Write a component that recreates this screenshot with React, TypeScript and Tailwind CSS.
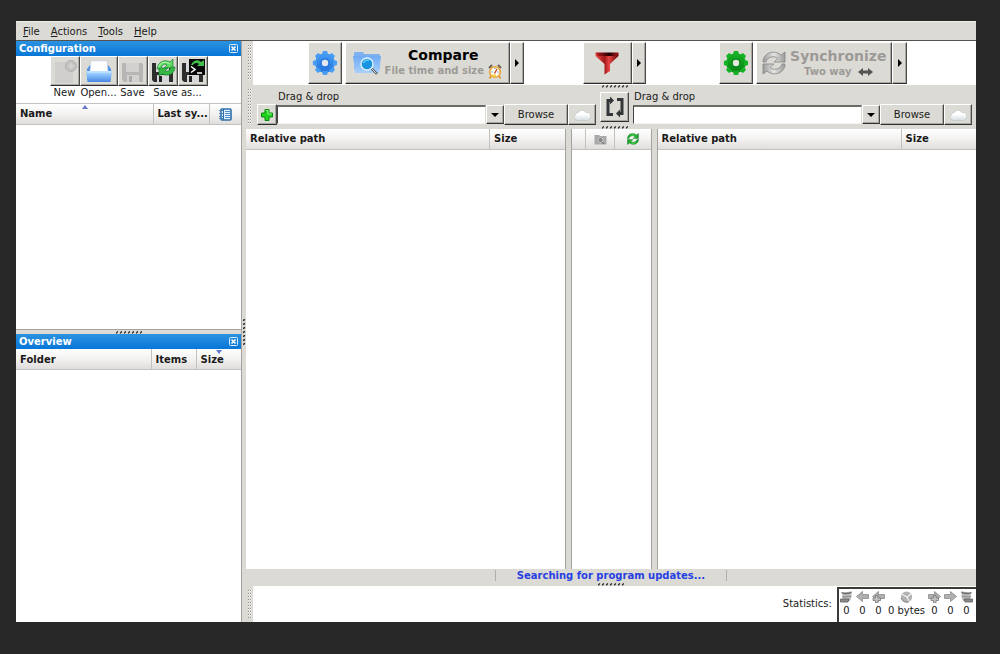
import { useState, type ReactNode } from 'react'
import clsx from 'clsx'

const raised =
  'border border-t-white border-l-white border-r-[#4a4a4a] border-b-[#2e2e2e] bg-[#dcdad5] shadow-[inset_-1px_-1px_0_#aaa8a3]'

interface ToolButtonProps {
  label: string
  className?: string
  disabled?: boolean
  children: ReactNode
}

function ToolButton({ label, className, disabled, children }: ToolButtonProps) {
  return (
    <button
      type="button"
      aria-label={label}
      disabled={disabled}
      className={clsx('flex shrink-0 items-center justify-center', raised, className)}
    >
      {children}
    </button>
  )
}

function ArrowRight() {
  return (
    <svg width="4" height="8" viewBox="0 0 4 8">
      <path d="M0 0L4 4L0 8Z" fill="#000" />
    </svg>
  )
}

// Dotted handle used on every splitter
function SashDots({ vertical }: { vertical?: boolean }) {
  const dots = [0, 1, 2, 3, 4, 5, 6]
  if (vertical) {
    return (
      <svg width="3" height="26" viewBox="0 0 3 26">
        {dots.map((i) => (
          <path key={i} d={`M0 ${i * 4 + 1.6}L2 ${i * 4 + 0.4}`} stroke="#222" strokeWidth="1.3" />
        ))}
      </svg>
    )
  }
  return (
    <svg width="26" height="3" viewBox="0 0 26 3">
      {dots.map((i) => (
        <path key={i} d={`M${i * 4 + 0.3} 2.4L${i * 4 + 1.7} 0.4`} stroke="#222" strokeWidth="1.3" />
      ))}
    </svg>
  )
}

function Gripper() {
  return (
    <div className="flex w-[7px] shrink-0 justify-center py-1">
      <div className="w-[4px] bg-[linear-gradient(135deg,#8d8b87_0_30%,#f4f3f1_30%_50%,transparent_50%)] bg-[size:2px_3px]" />
    </div>
  )
}

function GearIcon({ id, light, dark, hole }: { id: string; light: string; dark: string; hole: string }) {
  const teeth = [0, 45, 90, 135, 180, 225, 270, 315]
  return (
    <svg width="26" height="26" viewBox="0 0 26 26">
      <defs>
        <linearGradient id={id} x1="0" y1="0" x2="0" y2="26" gradientUnits="userSpaceOnUse">
          <stop offset="0" stopColor={light} />
          <stop offset="1" stopColor={dark} />
        </linearGradient>
      </defs>
      <g fill={`url(#${id})`}>
        <circle cx="13" cy="13" r="9.8" />
        {teeth.map((a) => (
          <path key={a} d="M9.8 5L10.9 0.9H15.1L16.2 5Z" transform={`rotate(${a} 13 13)`} />
        ))}
      </g>
      <circle cx="13" cy="13" r="5" fill={dark} opacity="0.5" />
      <circle cx="13" cy="13" r="3.2" fill={hole} />
    </svg>
  )
}

function NewIcon() {
  return (
    <svg width="26" height="26" viewBox="0 0 26 26">
      <path d="M3 4H17L21 10V25H3Z" fill="#d0cfce" />
      <path d="M3 8L20 25M3 14L14 25M5 4L21 20M11 4L21 14M3 20L19 4M8 25L21 12" stroke="#cacac9" strokeWidth="0.6" />
      <circle cx="19" cy="8" r="5.5" fill="#c3c2c1" stroke="#b2b1b0" />
      <path d="M19 5V11M16 8H22" stroke="#d3d2d1" strokeWidth="2" />
    </svg>
  )
}

function OpenIcon() {
  return (
    <svg width="28" height="26" viewBox="0 0 28 26">
      <defs>
        <linearGradient id="open" x1="0" y1="0" x2="0" y2="1">
          <stop offset="0" stopColor="#b5dcff" />
          <stop offset="0.35" stopColor="#8cc3fd" />
          <stop offset="1" stopColor="#4686df" />
        </linearGradient>
      </defs>
      <path d="M2 11L5 7H23L26 11V22H2Z" fill="#4e91e4" />
      <path d="M6 3H22L23 14H5Z" fill="#fff" stroke="#c9d8ea" strokeWidth="0.7" />
      <path d="M1 13H27L25.5 24H2.5Z" fill="url(#open)" />
      <path d="M2 14H26" stroke="#d5ebff" />
    </svg>
  )
}

function FloppyShape({ body, label, slot }: { body: string; label: string; slot: string }) {
  return (
    <>
      <path d="M2 5H22L23 6V24H4L2 22Z" fill={body} />
      <path d="M6 5H19V14H6Z" fill={label} />
      <path d="M7 17H19V24H7Z" fill={label} />
      <path d="M9 18H12V24H9Z" fill={slot} />
    </>
  )
}

function SaveIcon() {
  return (
    <svg width="26" height="26" viewBox="0 0 26 26">
      <FloppyShape body="#b7b6b5" label="#d2d1d0" slot="#acabaa" />
    </svg>
  )
}

function SaveSyncIcon() {
  return (
    <svg width="26" height="26" viewBox="0 0 26 26">
      <FloppyShape body="#2d2d2d" label="#d7d8da" slot="#222" />
      <g stroke="#15702a" strokeWidth="0.6">
        <path d="M7 11C8 3 15 1 20 4L23 1V10H14L17 7C14 5 12 7 11 11Z" fill="#5bdc60" />
        <path d="M25 9C25 16 18 19 12 16L9 18V10H18L15 13C18 14 20 12 21 9Z" fill="#35b944" />
      </g>
      <path d="M9 9C10 4 15 3 20 6" stroke="#c0f5bb" fill="none" />
    </svg>
  )
}

function SaveBatchIcon() {
  return (
    <svg width="26" height="26" viewBox="0 0 26 26">
      <FloppyShape body="#2d2d2d" label="#d7d8da" slot="#222" />
      <rect x="9" y="1" width="16" height="16" fill="#080808" />
      <path d="M11 7C13 2 18 1 21 4L24 2V8H17L19 6C17 4 14 5 13 7Z" fill="#41bd4c" />
      <path d="M11 8.5L15 11.5L11 14.5M17 15H22" stroke="#fff" strokeWidth="1.5" fill="none" />
    </svg>
  )
}

function LogIcon() {
  return (
    <svg width="13" height="13" viewBox="0 0 13 13">
      <rect x="2" y="1" width="10" height="11" rx="1" fill="#e4f1fc" stroke="#2f6da8" strokeWidth="1.6" />
      <path d="M4.5 1V12" stroke="#2f6da8" />
      <path d="M0 2.5H4M0 5.5H4M0 8.5H4M0 10.5H4" stroke="#4d86ba" />
      <path d="M6 3.5H11M6 5.5H11M6 7.5H11M6 9.5H11" stroke="#4c94d6" />
    </svg>
  )
}

function FolderSearchIcon() {
  return (
    <svg width="28" height="24" viewBox="0 0 28 24">
      <defs>
        <linearGradient id="folder" x1="0" y1="0" x2="0" y2="1">
          <stop offset="0" stopColor="#6faaf4" />
          <stop offset="1" stopColor="#a9d0fc" />
        </linearGradient>
      </defs>
      <path d="M1 2L2 1H10L11 3H26L27 4V18H1Z" fill="#7db0f0" />
      <path d="M0 5H28L26 22H2Z" fill="url(#folder)" />
      <path d="M18 17L24 23" stroke="#555" strokeWidth="2.4" />
      <path d="M18 17L23.5 22.5" stroke="#ddd" />
      <circle cx="14" cy="13" r="6" fill="#1793df" stroke="#dff0fb" strokeWidth="1.4" />
      <path d="M10.5 12A4 4 0 0 1 16 9.5" stroke="#5fcafa" strokeWidth="1.6" fill="none" />
    </svg>
  )
}

function ClockIcon() {
  return (
    <svg width="14" height="15" viewBox="0 0 14 15">
      <path d="M1 4L4 1M10 1L13 4" stroke="#6a6152" strokeWidth="1.8" />
      <path d="M3 12L1.5 14.5M11 12L12.5 14.5" stroke="#e09223" strokeWidth="1.5" />
      <circle cx="7" cy="8" r="5.3" fill="#fdfbf0" stroke="#eba234" strokeWidth="1.6" />
      <path d="M6.5 9.5L9 5" stroke="#c53122" strokeWidth="1.2" fill="none" />
      <path d="M4 11.5H8" stroke="#f5d330" strokeWidth="1.8" />
      <path d="M7 4V5M10.5 8H9.5M4.5 8H3.5" stroke="#4178b8" />
    </svg>
  )
}

function FunnelIcon() {
  return (
    <svg width="24" height="24" viewBox="0 0 24 24">
      <defs>
        <linearGradient id="funnel">
          <stop offset="0" stopColor="#ee4b4b" />
          <stop offset="0.4" stopColor="#a3171a" />
          <stop offset="0.58" stopColor="#e64546" />
          <stop offset="1" stopColor="#650405" />
        </linearGradient>
        <linearGradient id="funnel-top">
          <stop offset="0" stopColor="#c81c1e" />
          <stop offset="0.6" stopColor="#240102" />
          <stop offset="1" stopColor="#b51719" />
        </linearGradient>
      </defs>
      <path d="M0.5 2H23.5V5L15 13V20L9.5 23.5V13L0.5 5Z" fill="url(#funnel)" />
      <path d="M0.5 1.5H23.5L21 5H3Z" fill="url(#funnel-top)" />
    </svg>
  )
}

interface SyncArrowsProps {
  id: string
  size: number
  light: string
  dark: string
  edge: string
}

// Two chasing arrows, shared by the big button and the small column header
function SyncArrows({ id, size, light, dark, edge }: SyncArrowsProps) {
  return (
    <svg width={size} height={size} viewBox="0 0 24 24">
      <defs>
        <linearGradient id={id}>
          <stop offset="0" stopColor={dark} />
          <stop offset="0.5" stopColor={light} />
          <stop offset="1" stopColor={dark} />
        </linearGradient>
      </defs>
      <g stroke={edge} strokeWidth="0.8" fill={`url(#${id})`}>
        <path d="M1 11C1 2 12 -2 19 4L23 1V11H12L16 7.5C12 4 5 6 4 11Z" />
        <path d="M23 13C23 22 12 26 5 20L1 23V13H12L8 16.5C12 20 19 18 20 13Z" />
      </g>
    </svg>
  )
}

function TwoWayIcon() {
  return (
    <svg width="15" height="8" viewBox="0 0 15 8">
      <path d="M0 4L5 0V2.5H10V0L15 4L10 8V5.5H5V8Z" fill="#555" />
    </svg>
  )
}

function PlusIcon() {
  return (
    <svg width="12" height="12" viewBox="0 0 12 12">
      <path d="M4 0.5H8V4H11.5V8H8V11.5H4V8H0.5V4H4Z" fill="#1fd31f" stroke="#078c0b" />
      <path d="M5 1.5H7V5H10.5" stroke="#8ef28c" fill="none" />
    </svg>
  )
}

function CloudIcon() {
  return (
    <svg width="18" height="12" viewBox="0 0 18 12">
      <defs>
        <linearGradient id="cloud" x1="0" y1="0" x2="0" y2="1">
          <stop offset="0.4" stopColor="#fff" />
          <stop offset="1" stopColor="#d4dde0" />
        </linearGradient>
      </defs>
      <path
        d="M4 11.5A3.4 3.4 0 0 1 2.6 5.6A2.8 2.8 0 0 1 5.4 3.4A4.3 4.3 0 0 1 13 3.6A4 4 0 0 1 14.5 11.5Z"
        fill="url(#cloud)"
        stroke="#b9c0c3"
        strokeWidth="0.6"
      />
    </svg>
  )
}

function SwapIcon() {
  return (
    <svg width="20" height="22" viewBox="0 0 20 22">
      <path d="M8 18.5H3V4.5H6" fill="none" stroke="#333638" strokeWidth="3" />
      <path d="M12 3.5H17V17.5H14" fill="none" stroke="#333638" strokeWidth="3" />
      <path d="M5 0.5L9 4.5L5 8.5Z" fill="#333638" />
      <path d="M15 13.5L11 17.5L15 21.5Z" fill="#333638" />
    </svg>
  )
}

function CategoryIcon() {
  return (
    <svg width="13" height="11" viewBox="0 0 13 11">
      <path d="M0.5 1H5L6 2H12.5V10.5H0.5Z" fill="#a9a9a9" />
      <circle cx="6.5" cy="6" r="2.5" fill="#858585" stroke="#d4d4d4" strokeWidth="0.8" />
      <path d="M8 8L10 10" stroke="#666" />
    </svg>
  )
}

interface StatArrowProps {
  flip?: boolean
  plus?: boolean
}

function StatArrow({ flip, plus }: StatArrowProps) {
  return (
    <svg width="13" height="12" viewBox="0 0 13 12">
      <g transform={flip ? 'matrix(-1 0 0 1 13 0)' : undefined}>
        <path d="M0.5 3.5H6.5V0.5L12.5 5.5L6.5 10.5V7.5H0.5Z" fill="#b0b0b0" stroke="#8c8c8c" strokeWidth="0.8" />
      </g>
      {plus && (
        <path
          d={flip ? 'M3.5 4.5H6V7H8.5V9.5H6V12H3.5V9.5H1V7H3.5Z' : 'M5.5 4.5H8V7H10.5V9.5H8V12H5.5V9.5H3V7H5.5Z'}
          fill="#c2c2c2"
          stroke="#777"
          strokeWidth="0.8"
        />
      )}
    </svg>
  )
}

function StatDelete({ flip }: { flip?: boolean }) {
  return (
    <svg width="12" height="12" viewBox="0 0 12 12">
      <g transform={flip ? 'matrix(-1 0 0 1 12 0)' : undefined}>
        <path d="M2 1.5L11.5 0.5V6L10 10H3Z" fill="#bcbcbc" />
        <path d="M1.5 1.5C4 3 9 3 11.5 1" stroke="#6c6c6c" strokeWidth="1.4" fill="none" />
        <path d="M2 5.5C5 7 8 4.5 11 5.5" stroke="#888" fill="none" />
        <path d="M0.5 8H9L8 11H0.5Z" fill="#8c8c8c" stroke="#5c5c5c" strokeWidth="0.8" />
      </g>
    </svg>
  )
}

function StatData() {
  return (
    <svg width="13" height="12" viewBox="0 0 13 12">
      <circle cx="6.5" cy="6" r="5.6" fill="#b2b2b2" />
      <path d="M7 6L1.5 3M7 6L11.5 2.5M7 6L9.5 11" stroke="#f2f2f2" strokeWidth="1.2" />
      <path d="M1 7C3 11 7 12 9 10.5" stroke="#838383" fill="none" />
    </svg>
  )
}

function PaneTitle({ title }: { title: string }) {
  return (
    <div className="flex h-[15px] shrink-0 items-center justify-between bg-linear-to-b from-[#2a92e0] to-[#0676d8] pr-[3px] pl-[3px] font-bold text-white">
      <h2>{title}</h2>
      <button type="button" aria-label={`Close ${title}`}>
        <svg width="9" height="9" viewBox="0 0 9 9">
          <rect x="0.5" y="0.5" width="8" height="8" rx="1" fill="none" stroke="#d9ebfa" />
          <path d="M2.5 2.5L6.5 6.5M6.5 2.5L2.5 6.5" stroke="#fff" strokeWidth="1.5" />
        </svg>
      </button>
    </div>
  )
}

const headRow = 'h-5 bg-linear-to-b from-white via-[#f3f2f1] to-[#e0dedc] text-left'
const headCell = 'border-b border-[#c4c2be] px-1 pt-px pb-0 font-bold whitespace-nowrap'

function FileGrid({ side }: { side: string }) {
  return (
    <div className="min-w-0 flex-1 bg-white">
      <table aria-label={`${side} files`} className="w-full table-fixed">
        <thead>
          <tr className={headRow}>
            <th className={clsx(headCell, 'border-r')}>Relative path</th>
            <th className={clsx(headCell, 'w-[75px]')}>Size</th>
          </tr>
        </thead>
      </table>
    </div>
  )
}

function FolderPicker({ side }: { side: 'left' | 'right' }) {
  const [path, setPath] = useState('')
  const id = `folder-${side}`

  return (
    <div className={clsx('flex min-w-0 flex-1 flex-col pt-[5px]', side === 'left' ? 'pl-1' : 'pr-1')}>
      <label htmlFor={id} className={clsx('h-[14px]', side === 'left' ? 'ml-[21px]' : 'ml-px')}>
        Drag &amp; drop
      </label>
      <div className="flex h-[21px] items-stretch">
        {side === 'left' && (
          <ToolButton label="Add folder pair" className="w-5">
            <PlusIcon />
          </ToolButton>
        )}
        <input
          id={id}
          type="text"
          value={path}
          onChange={(e) => setPath(e.target.value)}
          className="my-px min-w-0 flex-1 border border-t-2 border-t-[#6d6b68] border-r-[#dcdad5] border-b-[#f4f3f1] border-l-[#444] bg-white px-1 outline-none"
        />
        <ToolButton label="Recent folders" className="my-px w-[18px]">
          <svg width="8" height="4" viewBox="0 0 8 4">
            <path d="M0 0H8L4 4Z" fill="#000" />
          </svg>
        </ToolButton>
        <ToolButton label="Browse" className="w-16">
          Browse
        </ToolButton>
        <ToolButton label="Online storage" className="w-7">
          <CloudIcon />
        </ToolButton>
      </div>
    </div>
  )
}

const menus = ['File', 'Actions', 'Tools', 'Help']

const stats = [
  { name: 'Delete left', value: '0', icon: <StatDelete /> },
  { name: 'Update left', value: '0', icon: <StatArrow flip /> },
  { name: 'Create left', value: '0', icon: <StatArrow flip plus /> },
  { name: 'Data', value: '0 bytes', icon: <StatData /> },
  { name: 'Create right', value: '0', icon: <StatArrow plus /> },
  { name: 'Update right', value: '0', icon: <StatArrow /> },
  { name: 'Delete right', value: '0', icon: <StatDelete flip /> },
]

function Sidebar() {
  return (
    <aside className="flex w-[226px] shrink-0 flex-col border-r border-[#a5a39f]">
      <PaneTitle title="Configuration" />
      <div className="flex h-12 shrink-0 justify-center border-b border-[#c4c2be] bg-white pl-8 pr-[32px]">
        <div className="flex flex-col items-center">
          <ToolButton label="New" disabled className="h-[30px] w-[30px]">
            <NewIcon />
          </ToolButton>
          <span>New</span>
        </div>
        <div className="flex flex-col items-center">
          <ToolButton label="Open" className="h-[30px] w-[38px]">
            <OpenIcon />
          </ToolButton>
          <span>Open...</span>
        </div>
        <div className="flex flex-col items-center">
          <ToolButton label="Save" disabled className="h-[30px] w-[30px]">
            <SaveIcon />
          </ToolButton>
          <span>Save</span>
        </div>
        <div className="flex flex-col items-center">
          <div className="flex">
            <ToolButton label="Save as" className="h-[30px] w-[30px]">
              <SaveSyncIcon />
            </ToolButton>
            <ToolButton label="Save as batch job" className="h-[30px] w-[30px]">
              <SaveBatchIcon />
            </ToolButton>
          </div>
          <span>Save as...</span>
        </div>
      </div>

      <div className="grow-[225] basis-0 border-b border-[#a5a39f] bg-white">
        <table aria-label="Configurations" className="w-full table-fixed">
          <thead>
            <tr className={headRow}>
              <th className={clsx(headCell, 'relative border-r')}>
                Name
                <svg className="absolute top-px left-[66px]" width="6" height="4" viewBox="0 0 6 4">
                  <path d="M3 0L6 4H0Z" fill="#6477cf" />
                </svg>
              </th>
              <th className={clsx(headCell, 'w-[56px] border-r')}>Last sy...</th>
              <th className={clsx(headCell, 'w-8')}>
                <div className="flex justify-center">
                  <LogIcon />
                </div>
              </th>
            </tr>
          </thead>
        </table>
      </div>

      <div className="flex h-1 shrink-0 items-center justify-center">
        <SashDots />
      </div>

      <PaneTitle title="Overview" />
      <div className="grow-[272] basis-0 bg-white">
        <table aria-label="Overview" className="w-full table-fixed">
          <thead>
            <tr className={headRow}>
              <th className={clsx(headCell, 'border-r')}>Folder</th>
              <th className={clsx(headCell, 'w-[45px] border-r')}>Items</th>
              <th className={clsx(headCell, 'relative w-[45px]')}>
                Size
                <svg className="absolute top-px left-[19px]" width="6" height="4" viewBox="0 0 6 4">
                  <path d="M0 0H6L3 4Z" fill="#6477cf" />
                </svg>
              </th>
            </tr>
          </thead>
        </table>
      </div>
    </aside>
  )
}

function ActionBar() {
  return (
    <div className="flex h-11 shrink-0">
      <Gripper />
      <div className="flex min-w-0 flex-1 bg-white pt-px pb-px">
        <div className="grow-[55]" />
        <ToolButton label="Comparison settings" className="w-[34px]">
          <GearIcon id="gear-blue" light="#4ca3f8" dark="#1e6cd8" hole="#e3e8ef" />
        </ToolButton>
        <ToolButton label="Compare" className="ml-[3px] w-[165px] gap-1">
          <FolderSearchIcon />
          <span className="flex flex-col items-center pb-px">
            <span className="text-[14px] leading-[17px] font-bold text-black">Compare</span>
            <span className="flex items-center gap-1 font-bold text-[#9c9a97]">
              File time and size <ClockIcon />
            </span>
          </span>
        </ToolButton>
        <ToolButton label="Comparison variants" className="w-[14px]">
          <ArrowRight />
        </ToolButton>
        <div className="grow-[59]" />
        <ToolButton label="Filter" className="w-[49px]">
          <FunnelIcon />
        </ToolButton>
        <ToolButton label="Filter options" className="w-[14px]">
          <ArrowRight />
        </ToolButton>
        <div className="grow-[74]" />
        <ToolButton label="Synchronization settings" className="w-[34px]">
          <GearIcon id="gear-green" light="#18b928" dark="#087c13" hole="#e3e8e3" />
        </ToolButton>
        <ToolButton label="Synchronize" disabled className="ml-[3px] w-[136px] gap-1">
          <SyncArrows id="sync-big" size={24} light="#e4e4e4" dark="#9a9a9a" edge="#858585" />
          <span className="flex flex-col items-center font-bold text-[#9c9a97]">
            <span className="text-[14px] leading-[17px]">Synchronize</span>
            <span className="flex items-center gap-[6px]">
              Two way <TwoWayIcon />
            </span>
          </span>
        </ToolButton>
        <ToolButton label="Synchronization variants" className="w-[15px]">
          <ArrowRight />
        </ToolButton>
        <div className="grow-[69]" />
      </div>
    </div>
  )
}

export default function App() {
  return (
    <div className="flex min-h-screen bg-[#282828] pt-[21px] pr-6 pb-8 pl-4 font-['DejaVu_Sans',sans-serif] text-[10px] leading-[14px] text-[#1a1a1a]">
      <div className="flex min-w-0 flex-1 flex-col bg-[#dcdad5]">
        <nav className="flex h-5 shrink-0 items-center gap-[11px] border-t border-b border-t-[#f0efed] border-b-[#55534f] pt-px pl-[7px]">
          {menus.map((m) => (
            <button key={m} type="button">
              <span className="underline">{m[0]}</span>
              {m.slice(1)}
            </button>
          ))}
        </nav>

        <div className="flex min-h-0 flex-1">
          <Sidebar />
          <div className="flex w-1 shrink-0 items-center justify-end">
            <SashDots vertical />
          </div>

          <main className="flex min-w-0 flex-1 flex-col">
            <ActionBar />

            <div className="flex h-11 shrink-0">
              <Gripper />
              <FolderPicker side="left" />
              <div className="flex w-[37px] shrink-0 flex-col items-center justify-between">
                <SashDots />
                <ToolButton label="Swap sides" className="h-[30px] w-[29px]">
                  <SwapIcon />
                </ToolButton>
                <SashDots />
              </div>
              <FolderPicker side="right" />
            </div>

            <div className="flex flex-1">
              <FileGrid side="Left" />
              <div className="w-[7px] shrink-0 border-x border-[#a5a39f]" />
              <div className="w-[79px] shrink-0 bg-white">
                <table aria-label="Actions" className="w-full table-fixed">
                  <thead>
                    <tr className={headRow}>
                      <th aria-label="Selected" className={clsx(headCell, 'w-[14px] border-r')} />
                      <th className={clsx(headCell, 'w-[29px] border-r')}>
                        <div className="flex justify-center">
                          <CategoryIcon />
                        </div>
                      </th>
                      <th className={headCell}>
                        <div className="flex justify-center">
                          <SyncArrows id="sync-small" size={12} light="#3fd14d" dark="#159526" edge="#0c751a" />
                        </div>
                      </th>
                    </tr>
                  </thead>
                </table>
              </div>
              <div className="w-[7px] shrink-0 border-x border-[#a5a39f]" />
              <FileGrid side="Right" />
            </div>

            <div className="flex h-[17px] shrink-0 flex-col items-center justify-between">
              <div className="flex h-[13px] items-center">
                <span className="h-[11px] w-px bg-[#b0aeaa]" />
                <p className="px-[21px] font-bold text-[#2740e2]">Searching for program updates...</p>
                <span className="h-[11px] w-px bg-[#b0aeaa]" />
              </div>
              <SashDots />
            </div>

            <footer className="flex h-9 shrink-0">
              <Gripper />
              <div className="flex flex-1 items-stretch justify-end bg-white">
                <span className="self-center pr-[5px]">Statistics:</span>
                <dl className="mt-px flex gap-[3px] border-t-2 border-l-2 border-[#3a3a3a] pt-[2px] pr-[3px] pl-px">
                  {stats.map((s) => (
                    <div key={s.name} className="flex min-w-[13px] flex-col items-center gap-px">
                      <dt aria-label={s.name}>{s.icon}</dt>
                      <dd>{s.value}</dd>
                    </div>
                  ))}
                </dl>
              </div>
            </footer>
          </main>
        </div>
      </div>
    </div>
  )
}
